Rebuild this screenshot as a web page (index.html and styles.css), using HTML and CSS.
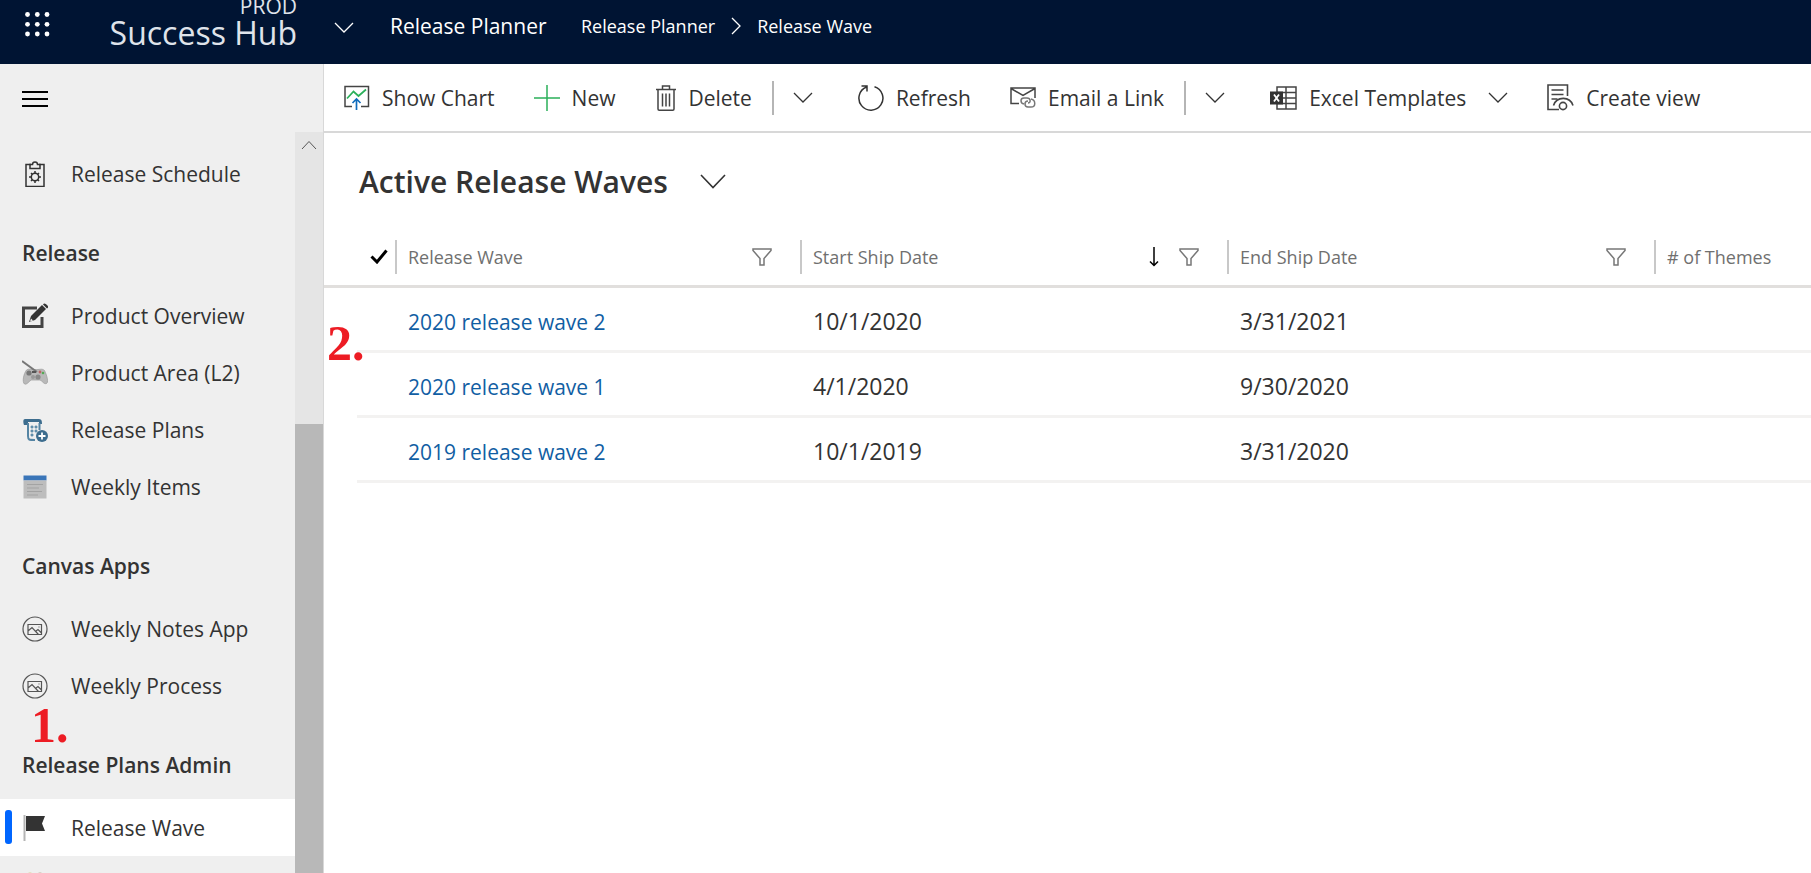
FILE: index.html
```html
<!DOCTYPE html>
<html lang="en">
<head>
<meta charset="utf-8">
<title>Release Waves - Release Planner</title>
<link rel="stylesheet" href="styles.css">
</head>
<body>
<svg class="defs" aria-hidden="true">
  <symbol id="chevron" viewBox="0 0 20 12"><path d="M1 1l9 9 9-9"/></symbol>
  <symbol id="funnel" viewBox="0 0 20 18"><path d="M1 1h18v1.500l-7 8V17H8v-6.500l-7-8z"/></symbol>
  <symbol id="picture" viewBox="0 0 26 26"><circle cx="13" cy="13" r="12"/><path d="M6 8.500h13.500v10H6zM6 15l4-3.500 6.500 7M14 15l2-1.500 3.500 3.500M16.500 11h1"/></symbol>
</svg>
<header class="topbar">
  <button class="launcher" aria-label="App launcher">
    <svg width="25" height="25" viewBox="0 0 25 25" fill="#fff"><circle cx="2.500" cy="2.500" r="2.400"/><circle cx="12.300" cy="2.500" r="2.400"/><circle cx="22" cy="2.500" r="2.400"/><circle cx="2.500" cy="12.300" r="2.400"/><circle cx="12.300" cy="12.300" r="2.400"/><circle cx="22" cy="12.300" r="2.400"/><circle cx="2.500" cy="22" r="2.400"/><circle cx="12.300" cy="22" r="2.400"/><circle cx="22" cy="22" r="2.400"/></svg>
  </button>
  <div class="logo"><span class="logo-env">PROD</span><span class="logo-name">Success Hub</span></div>
  <button class="app-switch" aria-label="Switch app"><svg class="line" width="20" height="12"><use href="#chevron"/></svg></button>
  <a class="app-name" href="#">Release Planner</a>
  <nav class="crumbs" aria-label="Breadcrumb">
    <a href="#">Release Planner</a>
    <svg class="line" width="10" height="18" viewBox="0 0 10 18"><path d="M1 1l8 8-8 8"/></svg>
    <a href="#">Release Wave</a>
  </nav>
</header>
<div class="shell">
  <aside class="sidebar">
    <button class="menu" aria-label="Collapse navigation"><svg width="26" height="17" viewBox="0 0 26 17" fill="#000"><path d="M0 0h26v2H0zM0 7h26v2H0zM0 14h26v2H0z"/></svg></button>
    <div class="nav-area">
      <nav class="nav">
        <a class="nav-item" href="#">
          <svg class="nav-icon" viewBox="0 0 26 26" fill="none" stroke="#333" stroke-width="1.500"><path d="M9 3.500H4v22h18v-22h-5" /><path d="M8 3.500v4h10v-4h-2.500c0-3.500-5-3.500-5 0z"/><circle cx="13" cy="16" r="3.700"/><path d="M13 10v2.500M13 19.500V22M7 16h2.500M16.500 16H19M9 12l1.500 1.500M17 12l-1.500 1.500M9 20l1.500-1.500M17 20l-1.500-1.500"/></svg>
          Release Schedule</a>
        <h2>Release</h2>
        <a class="nav-item" href="#">
          <svg class="nav-icon" viewBox="0 0 26 26"><path d="M15 5H1.500v18.500H20V14" fill="none" stroke="#444" stroke-width="3"/><path d="M7 19l2-6L20 2l4 4-11 11z" fill="#333"/><path d="M21 1.500c1-1.500 2.500-1 4 .500s1.500 2.500 0 3.500z" fill="#333"/><path d="M8 18.500l1-3 2 2z" fill="#eee"/></svg>
          Product Overview</a>
        <a class="nav-item" href="#">
          <svg class="nav-icon" viewBox="0 0 26 26"><path d="M4.500 10c3-2 5 0 8.500-.500 4 .500 7-1.500 9.500 1 3 6 4 12 2 13-3 1-4-3-7-3.500h-8C7 21 5 25 2.500 24 0 22 1.500 14 4.500 10z" fill="#b9b9b9" stroke="#999" stroke-width=".700"/><path d="M0 1l15 11" stroke="#777" stroke-width="2"/><circle cx="7" cy="13" r="2.600" fill="#777"/><circle cx="16" cy="17" r="2.600" fill="#888"/><circle cx="11" cy="17" r="2" fill="#999"/><circle cx="18" cy="12" r="1.400" fill="#b66"/><circle cx="21" cy="13" r="1.300" fill="#5a5"/><path d="M10 12h4" stroke="#555" stroke-width="2"/></svg>
          Product Area (L2)</a>
        <a class="nav-item" href="#">
          <svg class="nav-icon" viewBox="0 0 26 26"><path d="M3 2h14c3 0 3 3 3 5h-3V5H6v3H2C1 5 1 2 3 2z" fill="#3d6d8e"/><path d="M6 6v13c0 4 1 4 7 4M17.500 6v7" fill="none" stroke="#5484a3" stroke-width="2"/><path d="M9 9v2h2V9zM13 9v2h2V9zM9 13v2h2v-2zM13 13v2h2v-2zM9 17v2h2v-2z" fill="#5484a3" stroke="#6994ae" stroke-width=".800"/><circle cx="20" cy="19" r="6" fill="#3d6d8e"/><path d="M20 15.500v7M16.500 19h7" stroke="#fff" stroke-width="1.800"/></svg>
          Release Plans</a>
        <a class="nav-item" href="#">
          <svg class="nav-icon" viewBox="0 0 26 26"><path d="M1.500 1.500h23v5h-23z" fill="#3a75b8"/><path d="M1.500 6.500h23v18h-23z" fill="#bdbdbd"/><path d="M5 10.500h16M5 14h12M5 17.500h15M5 21h11" stroke="#a3a3a3" stroke-width="1.200"/></svg>
          Weekly Items</a>
        <h2>Canvas Apps</h2>
        <a class="nav-item" href="#"><svg class="nav-icon thin"><use href="#picture"/></svg>Weekly Notes App</a>
        <a class="nav-item" href="#"><svg class="nav-icon thin"><use href="#picture"/></svg>Weekly Process</a>
        <h2>Release Plans Admin<span class="mark mark-one">1.</span></h2>
        <a class="nav-item selected" href="#" aria-current="page">
          <svg class="nav-icon" viewBox="0 0 26 26"><path d="M2.500 0v26" stroke="#b5b5b5" stroke-width="2"/><path d="M4 1h19l-3 7.500 3 7.500H4z" fill="#333"/></svg>
          Release Wave</a>
        <a class="nav-item" href="#" aria-label="More">
          <svg class="nav-icon" viewBox="0 0 26 26"><circle cx="8" cy="5" r="4.500" fill="#d9c983"/><circle cx="18" cy="5" r="4.500" fill="#b9a58f"/><path d="M2 24c0-16 22-16 22 0z" fill="#d9c983"/></svg></a>
      </nav>
      <div class="scroll"><button class="scroll-up" aria-label="Scroll up"><svg width="16" height="10" viewBox="0 0 16 10" fill="none" stroke="#555"><path d="M1 9l7-7.500L15 9"/></svg></button><div class="thumb"></div></div>
    </div>
  </aside>
  <main class="content">
    <div class="toolbar" role="toolbar" aria-label="Commands">
      <button class="cmd"><svg width="26" height="26" viewBox="0 0 26 26" fill="none"><path d="M8 21.500H1v-20h23.500v20H17" stroke="#444" stroke-width="1.500"/><path d="M3 13.500l6.500-7 5 4.500L22 4.500" stroke="#2bb05a" stroke-width="1.700"/><path d="M12.500 25V14M8.500 18l4-4 4 4" stroke="#0f6cbd" stroke-width="1.700"/></svg>Show Chart</button>
      <button class="cmd"><svg width="26" height="26" viewBox="0 0 26 26" stroke="#2bb05a" stroke-width="1.500"><path d="M13 0v26M0 13h26"/></svg>New</button>
      <button class="cmd"><svg width="22" height="26" viewBox="0 0 22 26" fill="none" stroke="#444" stroke-width="1.500"><path d="M1 4.500h20M7.500 4V1h7v3M3 5v19c0 .800.500 1.200 1.200 1.200h13.600c.700 0 1.200-.400 1.200-1.200V5M7.500 8.500v13M11 8.500v13M14.500 8.500v13"/></svg>Delete</button>
      <button class="drop split" aria-label="More delete options"><svg class="line" width="20" height="12"><use href="#chevron"/></svg></button>
      <button class="cmd"><svg width="26" height="26" viewBox="0 0 26 26" fill="none" stroke="#333" stroke-width="1.500"><path d="M8.500 2A12 12 0 1 0 16.500 1.700M3.500 1H9v5.500"/></svg>Refresh</button>
      <button class="cmd"><svg width="26" height="22" viewBox="0 0 26 22" fill="none" stroke="#444" stroke-width="1.500"><path d="M9 16.500H1V1h24v10M1 1.500l12 7 12-7"/><path d="M14 17c-4-1-4-6 0-6h3c4 0 4 5 1 5M21 12c5 1 5 8 0 8h-3c-4 0-4-6 0-6" stroke="#777"/></svg>Email a Link</button>
      <button class="drop split" aria-label="More email options"><svg class="line" width="20" height="12"><use href="#chevron"/></svg></button>
      <button class="cmd excel"><svg width="27" height="24" viewBox="0 0 27 24" fill="none" stroke="#444" stroke-width="1.500"><path d="M7 1h19v22H7zM16 1v22M7 6.500h19M7 12h19M7 17.500h19"/><path d="M0 5.500h13v13H0z" fill="#333" stroke="none"/><path d="M4 8.500l5 7M9 8.500l-5 7" stroke="#fff" stroke-width="1.800"/></svg>Excel Templates<svg class="line" width="20" height="12"><use href="#chevron"/></svg></button>
      <button class="cmd"><svg width="27" height="27" viewBox="0 0 27 27" fill="none" stroke="#444" stroke-width="1.600"><path d="M20.500 12V1H1v24.500h11M4.500 6h12M4.500 10.500h12M4.500 15h6"/><path d="M6.500 21.500c3-9.500 16.500-9.500 19.500 0"/><circle cx="16" cy="22" r="3.600"/></svg>Create view</button>
    </div>
    <button class="view-title"><h1>Active Release Waves</h1><svg class="line" width="26" height="15" viewBox="0 0 26 15"><path d="M1 1l12 12.500L25 1"/></svg></button>
    <div class="grid">
      <span class="mark mark-two">2.</span>
      <table>
        <colgroup><col class="c-gutter"><col class="c-check"><col class="c-name"><col class="c-date"><col class="c-date"><col></colgroup>
        <thead>
          <tr>
            <td></td>
            <th><button class="check" aria-label="Select all"><svg width="18" height="15" viewBox="0 0 18 15" fill="none" stroke="#000" stroke-width="3"><path d="M1.500 7.500L7 13 16.500 1.500"/></svg></button></th>
            <th><div class="head"><span>Release Wave</span><button aria-label="Filter Release Wave"><svg class="funnel" width="20" height="18"><use href="#funnel"/></svg></button></div></th>
            <th aria-sort="descending"><div class="head"><span>Start Ship Date</span><svg width="10" height="20" viewBox="0 0 10 20" fill="none" stroke="#000" stroke-width="1.500"><path d="M5 0v18M1 14.500l4 4 4-4"/></svg><button aria-label="Filter Start Ship Date"><svg class="funnel" width="20" height="18"><use href="#funnel"/></svg></button></div></th>
            <th><div class="head"><span>End Ship Date</span><button aria-label="Filter End Ship Date"><svg class="funnel" width="20" height="18"><use href="#funnel"/></svg></button></div></th>
            <th><div class="head"><span># of Themes</span></div></th>
          </tr>
        </thead>
        <tbody>
          <tr><td></td><td></td><td><a href="#">2020 release wave 2</a></td><td>10/1/2020</td><td>3/31/2021</td><td></td></tr>
          <tr><td></td><td></td><td><a href="#">2020 release wave 1</a></td><td>4/1/2020</td><td>9/30/2020</td><td></td></tr>
          <tr><td></td><td></td><td><a href="#">2019 release wave 2</a></td><td>10/1/2019</td><td>3/31/2020</td><td></td></tr>
        </tbody>
      </table>
    </div>
  </main>
</div>
</body>
</html>
```

FILE: styles.css
```css
* { box-sizing: border-box; }
body {
  margin: 0;
  height: 100vh;
  display: flex;
  flex-direction: column;
  overflow: hidden;
  background: #fff;
  color: #333;
  font: 21px/32px "Open Sans", "Noto Sans", sans-serif;
}
button {
  border: 0;
  padding: 0;
  background: none;
  color: inherit;
  font: inherit;
  display: flex;
  align-items: center;
}
a { color: inherit; text-decoration: none; }
svg { display: block; flex: none; }
.defs { position: absolute; width: 0; height: 0; }
.line { fill: none; stroke: currentColor; stroke-width: 1.300; }

/* Top bar */
.topbar {
  flex: none;
  height: 64px;
  display: flex;
  align-items: flex-start;
  background: #001433;
  color: #fff;
}
.launcher { padding: 12px 0 0 25px; }
.logo {
  width: 247px;
  display: flex;
  flex-direction: column;
  align-items: flex-end;
  color: #dfe3ea;
}
.logo-env { font-size: 21px; line-height: 12px; }
.logo-name { font-size: 32px; line-height: 42px; }
.app-switch { padding: 22px 0 0 37px; }
.app-name { padding: 10px 0 0 36px; width: 227px; white-space: nowrap; }
.crumbs {
  display: flex;
  align-items: center;
  gap: 16px;
  padding-top: 10px;
  font-size: 18px;
}

/* Sidebar */
.shell { flex: 1; min-height: 0; display: flex; }
.sidebar {
  flex: none;
  width: 324px;
  display: flex;
  flex-direction: column;
  background: #efefef;
  border-right: 1px solid #d8d8d8;
}
.menu { flex: none; height: 68px; padding: 2px 22px 0; }
.nav-area { flex: 1; min-height: 0; display: flex; }
.nav { flex: 1; min-width: 0; padding-top: 13px; overflow: hidden; }
.nav-item {
  position: relative;
  height: 57px;
  display: flex;
  align-items: center;
  gap: 23px;
  padding-left: 22px;
  white-space: nowrap;
}
.nav-icon { width: 26px; height: 26px; }
.thin { fill: none; stroke: #555; stroke-width: 1.200; }
.nav h2 {
  position: relative;
  margin: 0;
  padding: 35px 0 18px 22px;
  font-size: 21px;
  line-height: 32px;
  font-weight: 600;
}
.selected { background: #fff; }
.selected::before {
  content: "";
  position: absolute;
  left: 5px;
  top: 11px;
  width: 7px;
  height: 34px;
  border-radius: 3px;
  background: #06f;
}
.scroll {
  width: 28px;
  display: flex;
  flex-direction: column;
  background: #e5e5e5;
}
.scroll-up { height: 26px; justify-content: center; }
.thumb { flex: 1; margin-top: 266px; background: #b8b8b8; }

/* Command bar */
.content { flex: 1; min-width: 0; }
.toolbar {
  height: 69px;
  display: flex;
  align-items: center;
  padding-left: 20px;
  border-bottom: 2px solid #d8d8d8;
}
.cmd { gap: 12px; margin-right: 39px; white-space: nowrap; }
.cmd:has(+ .split) { margin-right: 20px; }
.split { border-left: 2px solid #b5b5b5; height: 34px; padding-left: 19px; margin-right: 45px; }
.excel .line { margin-left: 10px; }

/* View */
.view-title { height: 93px; padding: 4px 35px 0; gap: 32px; }
.view-title h1 {
  margin: 0;
  font-size: 30px;
  line-height: 40px;
  font-weight: 600;
}
.view-title .line { stroke-width: 1.600; }
.grid { position: relative; }
table { width: 100%; table-layout: fixed; border-collapse: separate; border-spacing: 0; }
.c-gutter { width: 33px; }
.c-check { width: 38px; }
.c-name { width: 405px; }
.c-date { width: 427px; }
th, td { padding: 0; text-align: left; font-weight: 400; white-space: nowrap; }
thead th, thead td { height: 62px; padding-top: 2px; border-bottom: 3px solid #e1dfdd; }
tbody td { height: 65px; padding: 4px 0 0 13px; border-bottom: 3px solid #f3f2f1; font-size: 23px; }
tbody td:first-child { border-bottom: 0; }
tbody a { color: #115ea3; font-size: 21px; }
.check { margin-left: 13px; }
.head {
  height: 34px;
  display: flex;
  align-items: center;
  gap: 20px;
  padding: 0 28px 0 11px;
  border-left: 2px solid #c8c8c8;
  color: #70706f;
  font-size: 18px;
}
.head span { flex: 1; }
.funnel { fill: none; stroke: #777; stroke-width: 1.500; }

/* Step numbers laid over the page */
.mark {
  position: absolute;
  color: #ed1c24;
  font: bold 50px/50px "Liberation Serif", serif;
}
.mark-one { left: 31px; top: -14px; }
.mark-two { left: 3px; top: 92px; }
```
